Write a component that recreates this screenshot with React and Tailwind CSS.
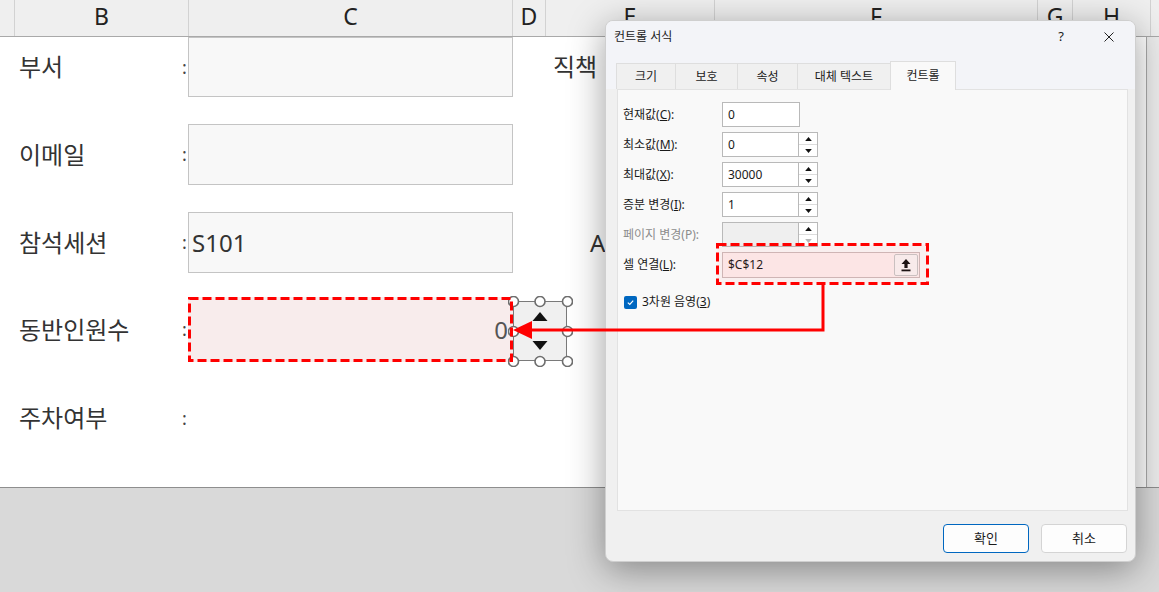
import React from "react";

const headerCols = [
  { label: "", cls: "w-[15px]" },
  { label: "B", cls: "w-[174px]" },
  { label: "C", cls: "w-[324px]" },
  { label: "D", cls: "w-[33px]" },
  { label: "E", cls: "w-[169px]" },
  { label: "F", cls: "w-[323px]" },
  { label: "G", cls: "w-[35px]" },
  { label: "H", cls: "w-[78px]" },
];

function Label({ children }) {
  return (
    <div className="flex w-[188px] shrink-0 items-center">
      <div className="w-[182px] pl-[19px] text-[24px] text-[#333]">{children}</div>
      <div className="w-[6px] text-[18px] text-[#444]">:</div>
    </div>
  );
}

function Field({ children }) {
  return (
    <div className="flex h-full w-[325px] shrink-0 items-center border border-[#c4c4c4] bg-[#f8f8f8] pl-[3px] text-[24px] text-[#333]">
      {children}
    </div>
  );
}

function Tri({ up, size = "small" }) {
  const cls = size === "small" ? "w-[7px] h-[4px]" : "w-[16px] h-[9px]";
  return (
    <svg viewBox="0 0 10 6" className={cls}>
      <polygon points={up ? "0,6 5,0 10,6" : "0,0 10,0 5,6"} fill="#111" />
    </svg>
  );
}

function SpinInput({ value, disabled }) {
  return (
    <div className="flex h-[25px] w-[96px]">
      <div
        className={
          "flex flex-1 items-center border border-[#b9b9b9] pl-[5px] text-[12px] " +
          (disabled ? "bg-[#efefef]" : "bg-white")
        }
      >
        {value}
      </div>
      <div className="flex w-[19px] flex-col border border-l-0 border-[#b9b9b9] bg-white">
        <div className="flex flex-1 items-center justify-center border-b border-[#dcdcdc]">
          <Tri up />
        </div>
        <div className={"flex flex-1 items-center justify-center " + (disabled ? "opacity-30" : "")}>
          <Tri />
        </div>
      </div>
    </div>
  );
}

function DlgRow({ label, disabled, children }) {
  return (
    <div className="flex h-[25px] items-center">
      <div className={"w-[99px] text-[12px] " + (disabled ? "text-[#8c8c8c]" : "text-[#1a1a1a]")}>{label}</div>
      {children}
    </div>
  );
}

function Dialog() {
  const tabs = [
    { t: "크기", cls: "w-[59px] border-l" },
    { t: "보호", cls: "w-[62px] border-l" },
    { t: "속성", cls: "w-[60px] border-l" },
    { t: "대체 텍스트", cls: "w-[93px] border-l" },
  ];
  return (
    <div className="absolute left-[605px] top-[20px] flex h-[542px] w-[531px] flex-col overflow-hidden rounded-[8px] border border-[#cfcfcf] bg-[#f0f0f0] text-[#1a1a1a] shadow-[0_8px_36px_rgba(0,0,0,0.38)]">
      {/* title bar */}
      <div className="flex h-[31px] items-center bg-[#f3f4f8] pl-[8px] pr-[21px] text-[12px]">
        <span>컨트롤 서식</span>
        <span className="ml-auto text-[13px]">?</span>
        <svg viewBox="0 0 10 10" className="ml-[40px] h-[10px] w-[10px]">
          <path d="M0.5 0.5 L9.5 9.5 M9.5 0.5 L0.5 9.5" stroke="#222" strokeWidth="1" />
        </svg>
      </div>

      {/* tabs */}
      <div className="flex items-end bg-[#f3f4f8] pl-[10px] pt-[9px]">
        {tabs.map((x) => (
          <div
            key={x.t}
            className={
              x.cls +
              " flex h-[26px] items-center justify-center border-t border-[#dedede] bg-[#f0f0f0] text-[12px]"
            }
          >
            {x.t}
          </div>
        ))}
        <div className="relative z-10 -mb-px flex h-[29px] w-[66px] items-center justify-center border border-b-0 border-[#dedede] bg-[#f9f9f9] text-[12px]">
          컨트롤
        </div>
      </div>

      {/* panel */}
      <div className="ml-[11px] flex h-[422px] w-[511px] flex-col gap-[5px] border border-[#e2e2e2] bg-[#f9f9f9] pl-[5px] pt-[12px]">
        <DlgRow label={<>현재값(<u>C</u>):</>}>
          <div className="flex h-[25px] w-[78px] items-center border border-[#b9b9b9] bg-white pl-[5px] text-[12px]">0</div>
        </DlgRow>
        <DlgRow label={<>최소값(<u>M</u>):</>}>
          <SpinInput value="0" />
        </DlgRow>
        <DlgRow label={<>최대값(<u>X</u>):</>}>
          <SpinInput value="30000" />
        </DlgRow>
        <DlgRow label={<>증분 변경(<u>I</u>):</>}>
          <SpinInput value="1" />
        </DlgRow>
        <DlgRow label="페이지 변경(P):" disabled>
          <SpinInput value="" disabled />
        </DlgRow>
        <DlgRow label={<>셀 연결(<u>L</u>):</>}>
          <div className="flex h-[26px] w-[198px] items-center border border-[#cdbcbc] bg-[#fcefef] pl-[5px] pr-[1px] text-[12px]">
            <span>$C$12</span>
            <div className="ml-auto flex h-[22px] w-[24px] items-center justify-center rounded-[2px] border border-[#c8c8c8] bg-[#f8f4f4]">
              <svg viewBox="0 0 10 14" className="h-[14px] w-[10px]">
                <polygon points="5,1 9.5,6 6.6,6 6.6,10 3.4,10 3.4,6 0.5,6" fill="#111" />
                <rect x="0.5" y="11.5" width="9" height="1.8" fill="#111" />
              </svg>
            </div>
          </div>
        </DlgRow>
        <div className="mt-[11px] flex items-center pl-[1px] text-[12px]">
          <div className="flex h-[13px] w-[13px] items-center justify-center rounded-[2px] bg-[#0067c0]">
            <svg viewBox="0 0 10 10" className="h-[9px] w-[9px]">
              <path d="M2 5.2 L4.2 7.2 L8 3" stroke="white" strokeWidth="1.3" fill="none" />
            </svg>
          </div>
          <span className="ml-[5px]">
            3차원 음영(<u>3</u>)
          </span>
        </div>
      </div>

      {/* buttons */}
      <div className="mt-[13px] flex justify-end gap-[12px] pr-[8px]">
        <button className="h-[29px] w-[86px] rounded-[4px] border border-[#0067c0] bg-[#fdfdfd] text-[13px]">확인</button>
        <button className="h-[29px] w-[86px] rounded-[4px] border border-[#d4d4d4] bg-[#fdfdfd] text-[13px]">취소</button>
      </div>
    </div>
  );
}

function SpinnerControl() {
  const xs = [5.5, 32, 59.5];
  const ys = [5.5, 35.5, 65.5];
  return (
    <div className="absolute left-[508px] top-[296px] h-[71px] w-[65px]">
      <div className="absolute left-[5px] top-[5px] flex h-[60px] w-[54px] flex-col items-center justify-center gap-[20px] border border-[#7a7a7a] bg-[#f0f0f0]">
        <Tri up size="big" />
        <Tri size="big" />
      </div>
      <svg className="absolute inset-0" width="65" height="71">
        {xs.map((x) =>
          ys.map((y) =>
            x === 32 && y === 35.5 ? null : (
              <circle key={x + "-" + y} cx={x} cy={y} r="5" fill="white" stroke="#6e6e6e" strokeWidth="1.6" />
            )
          )
        )}
      </svg>
    </div>
  );
}

export default function App() {
  return (
    <div className="relative h-[592px] w-[1159px] overflow-hidden bg-[#d9d9d9] font-['Noto_Sans','Noto_Sans_CJK_KR',sans-serif]">
      {/* column header */}
      <div className="flex h-[37px] border-b border-[#a9a9a9] bg-[#efefef]">
        {headerCols.map((c, i) => (
          <div
            key={i}
            className={c.cls + " shrink-0 border-r border-[#d2d2d2] pt-[1px] text-center text-[23px] leading-[30px] text-[#222]"}
          >
            {c.label}
          </div>
        ))}
        <div className="flex-1" />
      </div>

      {/* sheet body */}
      <div className="flex h-[451px] border-b border-[#8e8e8e]">
        <div className="flex w-[1147px] flex-col border-r border-[#a9a9a9] bg-white">
          <div className="flex h-[60px] items-center">
            <Label>부서</Label>
            <Field />
            <div className="ml-[40px] text-[24px] text-[#333]">직책</div>
          </div>
          <div className="mt-[27px] flex h-[61px] items-center">
            <Label>이메일</Label>
            <Field />
          </div>
          <div className="mt-[27px] flex h-[61px] items-center">
            <Label>참석세션</Label>
            <Field>S101</Field>
            <div className="ml-[77px] text-[24px] text-[#333]">A</div>
          </div>
          <div className="mt-[24px] flex h-[65px] items-center">
            <Label>동반인원수</Label>
            <div className="flex h-full w-[325px] shrink-0 items-center justify-end bg-[#f8ecec] pr-[5px] text-[24px] text-[#555]">
              0
            </div>
          </div>
          <div className="mt-[26px] flex h-[60px] items-center">
            <Label>주차여부</Label>
          </div>
        </div>
        <div className="flex-1 bg-[#ececec]" />
      </div>

      <SpinnerControl />
      <Dialog />

      {/* annotation overlay */}
      <svg className="pointer-events-none absolute inset-0" width="1159" height="592">
        <rect x="189.5" y="298.5" width="322" height="62" fill="none" stroke="#ff0000" strokeWidth="3" strokeDasharray="9 4" />
        <rect x="717.5" y="244.5" width="210" height="39" fill="rgba(255,60,60,0.05)" stroke="#ff0000" strokeWidth="3" strokeDasharray="9 4" />
        <polyline points="823,285 823,330 530,330" fill="none" stroke="#ff0000" strokeWidth="3" />
        <polygon points="513,330 532,321 532,339" fill="#ff0000" />
      </svg>
    </div>
  );
}
